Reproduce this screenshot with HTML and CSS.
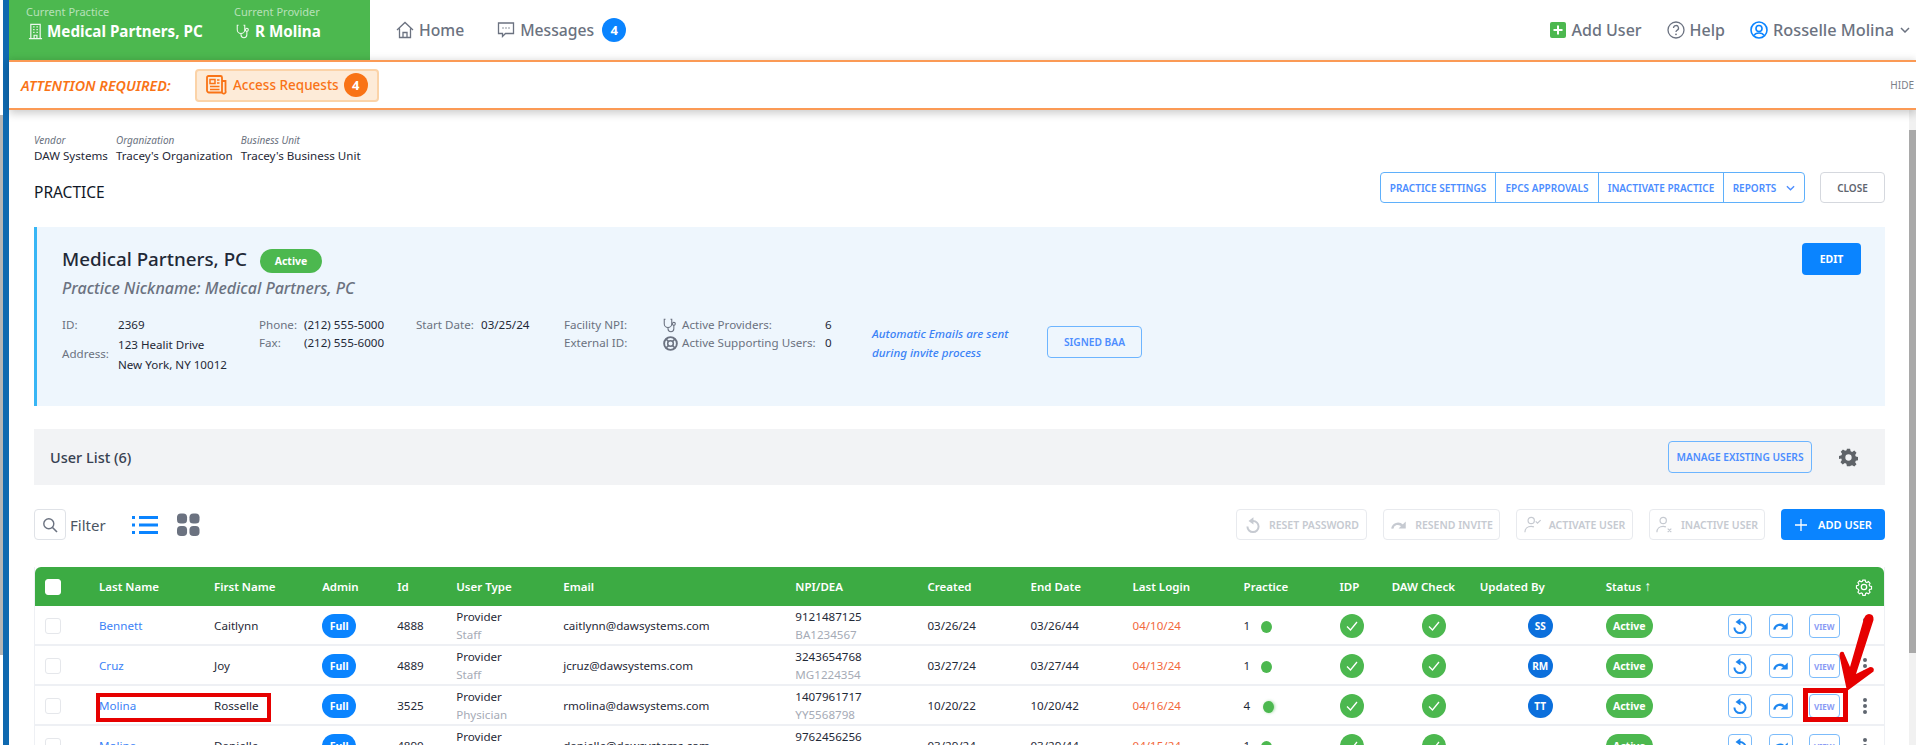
FILE: index.html
```html
<!DOCTYPE html>
<html lang="en">
<head>
<meta charset="utf-8">
<title>Practice</title>
<link rel="stylesheet" href="styles.css">
</head>
<body>
<svg class="defs" width="0" height="0" aria-hidden="true">
  <symbol id="i-building" viewBox="0 0 16 18"><path d="M3 1.500h10v15H3zM1 16.500h14M5.500 4h1.500M9 4h1.500M5.500 7h1.500M9 7h1.500M5.500 10h1.500M9 10h1.500M6.500 16.500v-3.500h3v3.500" fill="none" stroke="currentColor" stroke-width="1.300"/></symbol>
  <symbol id="i-steth" viewBox="0 0 18 18"><path d="M3 1.500H1.500v5.500a4.500 4.500 0 0 0 9 0V1.500H9M6 11.500v1.500a3.500 3.500 0 0 0 7 0v-4" fill="none" stroke="currentColor" stroke-width="1.300"/><circle cx="13" cy="7" r="1.800" fill="none" stroke="currentColor" stroke-width="1.300"/></symbol>
  <symbol id="i-reset" viewBox="0 0 20 20"><path d="M10 5.500a6.200 6.200 0 1 1-6.200 6.200" fill="none" stroke="currentColor" stroke-width="2.200"/><path d="M10.500 1.500v8L5 5.500z" fill="currentColor"/></symbol>
  <symbol id="i-redo" viewBox="0 0 20 20"><path d="M2.500 14c1-5 7-7.500 11.500-3" fill="none" stroke="currentColor" stroke-width="2.500"/><path d="M17.500 6v8h-8z" fill="currentColor"/></symbol>
  <symbol id="i-check" viewBox="0 0 24 24"><circle cx="12" cy="12" r="12" fill="#4cb84f"/><path d="M7 12.500l3.500 3.500 6.500-8" fill="none" stroke="#fff" stroke-width="1.300"/></symbol>
  <symbol id="i-gear" viewBox="0 0 24 24"><path fill-rule="evenodd" fill="currentColor" d="M10 1h4l.7 3.100 1.900.8 2.700-1.700 2.800 2.800-1.700 2.700.8 1.900 3.100.7v4l-3.100.7-.8 1.900 1.700 2.700-2.800 2.800-2.700-1.700-1.900.8L14 23h-4l-.7-3.100-1.900-.8-2.700 1.700-2.800-2.800 1.700-2.700-.8-1.900L0 14v-4l3.100-.7.800-1.900-1.700-2.700L5 1.900l2.700 1.700 1.900-.8zM12 8a4 4 0 1 0 0 8 4 4 0 0 0 0-8z"/></symbol>
</svg>

<div class="gutter"><div class="gutter-thumb"></div></div>

<div class="main">
  <header class="topbar">
    <div class="context">
      <div class="context-block context-practice">
        <div class="context-label">Current Practice</div>
        <div class="context-value"><svg class="context-icon"><use href="#i-building"/></svg>Medical Partners, PC</div>
      </div>
      <div class="context-block">
        <div class="context-label">Current Provider</div>
        <div class="context-value"><svg class="context-icon"><use href="#i-steth"/></svg>R Molina</div>
      </div>
    </div>
    <nav class="nav">
      <a class="nav-item nav-home"><svg class="nav-icon" viewBox="0 0 18 18"><path d="M1 9l8-7.500L17 9M3.500 7.500V16.500h11V7.500M7 16.500v-5h4v5" fill="none" stroke="currentColor" stroke-width="1.300"/></svg>Home</a>
      <a class="nav-item nav-msg"><svg class="nav-icon" viewBox="0 0 18 18"><path d="M1.500 2h15v10.500h-8l-3 3v-3h-4z" fill="none" stroke="currentColor" stroke-width="1.300"/><path d="M5.500 7h1M8.500 7h1M11.500 7h1" stroke="currentColor" stroke-width="1.300"/></svg>Messages<span class="count count-blue">4</span></a>
    </nav>
    <div class="nav nav-right">
      <a class="nav-item"><svg class="nav-icon-sq" viewBox="0 0 16 16"><rect width="16" height="16" rx="2" fill="#4cb84f"/><path d="M8 3.500v9M3.500 8h9" stroke="#fff" stroke-width="2"/></svg>Add User</a>
      <a class="nav-item"><svg class="nav-icon" viewBox="0 0 18 18"><circle cx="9" cy="9" r="8" fill="none" stroke="currentColor" stroke-width="1.300"/><path d="M6.500 7a2.500 2.500 0 1 1 3.500 2.300c-.7.400-1 .8-1 1.700" fill="none" stroke="currentColor" stroke-width="1.300"/><circle cx="9" cy="13.300" r=".9" fill="currentColor"/></svg>Help</a>
      <a class="nav-item nav-user"><svg class="nav-icon nav-icon-blue" viewBox="0 0 18 18"><circle cx="9" cy="9" r="8" fill="none" stroke="currentColor" stroke-width="1.600"/><circle cx="9" cy="7.500" r="3" fill="none" stroke="currentColor" stroke-width="1.600"/><path d="M4 14.500c1-2 3-2.500 5-2.500s4 .5 5 2.500" fill="none" stroke="currentColor" stroke-width="1.600"/></svg>Rosselle Molina<svg class="chev" viewBox="0 0 10 6"><path d="M1 1l4 4 4-4" fill="none" stroke="currentColor" stroke-width="1.500"/></svg></a>
    </div>
  </header>

  <div class="alert">
    <span class="alert-title">ATTENTION REQUIRED:</span>
    <button class="alert-btn"><svg class="alert-icon" viewBox="0 0 21 20"><path d="M1 2.500a1.500 1.500 0 0 1 1.500-1.500h12a1.500 1.500 0 0 1 1.500 1.500v15H3a2 2 0 0 1-2-2zM16 6h3.500v10a1.800 1.800 0 0 1-3.500 1.500" fill="none" stroke="currentColor" stroke-width="1.800"/><path d="M4 4.500h5v4H4zM11 5h2.500M11 8h2.500M4 11.500h9.500M4 14.500h9.500" fill="none" stroke="currentColor" stroke-width="1.500"/></svg>Access Requests<span class="count count-orange">4</span></button>
    <span class="alert-hide">HIDE</span>
  </div>

  <div class="body-wrap">
    <main class="content">
      <div class="crumbs">
        <div class="crumb"><div class="crumb-label">Vendor</div><div class="crumb-value">DAW Systems</div></div>
        <div class="crumb"><div class="crumb-label">Organization</div><div class="crumb-value">Tracey's Organization</div></div>
        <div class="crumb"><div class="crumb-label">Business Unit</div><div class="crumb-value">Tracey's Business Unit</div></div>
      </div>

      <div class="title-row">
        <h1 class="page-title">PRACTICE</h1>
        <div class="title-actions">
          <div class="btn-group">
            <button class="group-btn group-settings">PRACTICE SETTINGS</button>
            <button class="group-btn group-epcs">EPCS APPROVALS</button>
            <button class="group-btn group-inactivate">INACTIVATE PRACTICE</button>
            <button class="group-btn group-reports">REPORTS<svg class="chev-sm" viewBox="0 0 10 6"><path d="M1 1l4 4 4-4" fill="none" stroke="currentColor" stroke-width="1.500"/></svg></button>
          </div>
          <button class="btn-close">CLOSE</button>
        </div>
      </div>

      <section class="panel">
        <div class="panel-head">
          <div class="panel-titles">
            <div class="panel-name-row"><h2 class="panel-name">Medical Partners, PC</h2><span class="pill pill-head">Active</span></div>
            <div class="panel-nick">Practice Nickname: Medical Partners, PC</div>
          </div>
          <button class="btn-edit">EDIT</button>
        </div>
        <div class="info">
          <div class="info-col info-id">
            <span class="lbl">ID:</span><span class="val">2369</span>
            <span class="lbl lbl-mid">Address:</span><span class="val val-addr">123 Healit Drive<br>New York, NY 10012</span>
          </div>
          <div class="info-col info-phone">
            <span class="lbl">Phone:</span><span class="val">(212) 555-5000</span>
            <span class="lbl">Fax:</span><span class="val">(212) 555-6000</span>
          </div>
          <div class="info-col info-date">
            <span class="lbl">Start Date:</span><span class="val">03/25/24</span>
          </div>
          <div class="info-col info-ext">
            <span class="lbl">Facility NPI:</span>
            <span class="lbl">External ID:</span>
          </div>
          <div class="info-col info-active">
            <span class="lbl lbl-icon"><svg class="info-icon"><use href="#i-steth"/></svg>Active Providers:</span><span class="val">6</span>
            <span class="lbl lbl-icon"><svg class="info-icon" viewBox="0 0 16 16"><circle cx="8" cy="8" r="6.800" fill="none" stroke="currentColor" stroke-width="2"/><circle cx="8" cy="8" r="3" fill="none" stroke="currentColor" stroke-width="1.600"/><path d="M3.500 3.500l2.500 2.500M12.500 3.500L10 6M3.500 12.500L6 10M12.500 12.500L10 10" stroke="currentColor" stroke-width="1.600"/></svg>Active Supporting Users:</span><span class="val">0</span>
          </div>
          <div class="info-note">Automatic Emails are sent<br>during invite process</div>
          <div><button class="btn-outline btn-baa">SIGNED BAA</button></div>
        </div>
      </section>

      <div class="list-bar">
        <span class="list-title">User List (6)</span>
        <button class="btn-outline btn-manage">MANAGE EXISTING USERS</button>
        <svg class="list-gear"><use href="#i-gear"/></svg>
      </div>

      <div class="filter-row">
        <button class="search-btn"><svg class="search-icon" viewBox="0 0 16 16"><circle cx="6.800" cy="6.800" r="5" fill="none" stroke="currentColor" stroke-width="1.400"/><path d="M10.500 10.500L15 15" stroke="currentColor" stroke-width="1.600"/></svg></button>
        <span class="filter-text">Filter</span>
        <svg class="view-list" viewBox="0 0 26 20"><path d="M7 2.500h19M7 10h19M7 17.500h19" stroke="#0a84ff" stroke-width="2.800"/><path d="M0 2.500h3M0 10h3M0 17.500h3" stroke="#0a84ff" stroke-width="2.800"/></svg>
        <svg class="view-grid" viewBox="0 0 24 24"><rect width="10.500" height="10.500" rx="4" fill="#6b7280"/><rect x="13" width="10.500" height="10.500" rx="4" fill="#6b7280"/><rect y="13" width="10.500" height="10.500" rx="4" fill="#6b7280"/><rect x="13" y="13" width="10.500" height="10.500" rx="4" fill="#6b7280"/></svg>
        <div class="bulk">
          <button class="btn-muted btn-reset"><svg class="muted-icon"><use href="#i-reset"/></svg>RESET PASSWORD</button>
          <button class="btn-muted btn-resend"><svg class="muted-icon"><use href="#i-redo"/></svg>RESEND INVITE</button>
          <button class="btn-muted btn-activate"><svg class="muted-icon" viewBox="0 0 20 20"><circle cx="8" cy="5" r="3.500" fill="none" stroke="currentColor" stroke-width="1.300"/><path d="M1 18c0-4 3-6.500 7-6.500 1 0 2 .2 3 .6M13 6l2 2 3.500-3.500" fill="none" stroke="currentColor" stroke-width="1.300"/></svg>ACTIVATE USER</button>
          <button class="btn-muted btn-inactive"><svg class="muted-icon" viewBox="0 0 20 20"><circle cx="8" cy="5" r="3.500" fill="none" stroke="currentColor" stroke-width="1.300"/><path d="M1 18c0-4 3-6.500 7-6.500 1 0 2 .2 3 .6M13 14l4 4M17 14l-4 4" fill="none" stroke="currentColor" stroke-width="1.300"/></svg>INACTIVE USER</button>
          <button class="btn-add"><svg class="add-icon" viewBox="0 0 14 14"><path d="M7 1v12M1 7h12" stroke="currentColor" stroke-width="1.300"/></svg>ADD USER</button>
        </div>
      </div>

      <table class="users">
        <colgroup>
          <col class="c-check"><col class="c-last"><col class="c-first"><col class="c-admin"><col class="c-id"><col class="c-type"><col class="c-email"><col class="c-npi"><col class="c-created"><col class="c-end"><col class="c-login"><col class="c-practice"><col class="c-idp"><col class="c-daw"><col class="c-upd"><col class="c-status"><col class="c-actions">
        </colgroup>
        <thead>
          <tr>
            <th class="cell-check"><span class="box box-head"></span></th>
            <th>Last Name</th><th>First Name</th><th>Admin</th><th>Id</th><th>User Type</th><th>Email</th><th>NPI/DEA</th><th>Created</th><th>End Date</th><th>Last Login</th><th>Practice</th><th>IDP</th><th>DAW Check</th><th>Updated By</th><th>Status <span class="sort">↑</span></th>
            <th class="th-gear"><svg class="head-gear" viewBox="0 0 20 20"><path d="M8.500 1.500h3l.5 2.300 1.500.7 2-1.200 2 2.100-1.200 2 .7 1.500 2.300.5v3l-2.300.5-.7 1.500 1.200 2-2 2.100-2-1.200-1.500.7-.5 2.300h-3l-.5-2.300-1.500-.7-2 1.200-2-2.100 1.200-2-.7-1.500L.7 11.500v-3L3 8l.7-1.500-1.200-2 2-2.100 2 1.200L8 2.900z" fill="none" stroke="#fff" stroke-width="1.400" transform="translate(1 1) scale(.9)"/><circle cx="10" cy="10" r="3" fill="none" stroke="#fff" stroke-width="1.400"/></svg></th>
          </tr>
        </thead>
        <tbody>
          <tr>
            <td class="cell-check"><span class="box"></span></td>
            <td><a class="link">Bennett</a></td><td>Caitlynn</td><td><span class="full">Full</span></td><td>4888</td>
            <td><div>Provider</div><div class="sub">Staff</div></td><td>caitlynn@dawsystems.com</td>
            <td><div>9121487125</div><div class="sub">BA1234567</div></td><td>03/26/24</td><td>03/26/44</td><td class="login">04/10/24</td>
            <td><span class="pcount">1</span><span class="dot"></span></td>
            <td><svg class="ok"><use href="#i-check"/></svg></td><td class="cell-daw"><svg class="ok"><use href="#i-check"/></svg></td>
            <td class="cell-upd"><span class="avatar">SS</span></td><td><span class="pill">Active</span></td>
            <td><div class="acts"><button class="act act-reset"><svg class="act-icon"><use href="#i-reset"/></svg></button><button class="act act-redo"><svg class="act-icon"><use href="#i-redo"/></svg></button><button class="act act-view">VIEW</button><span class="kebab"></span></div></td>
          </tr>
          <tr>
            <td class="cell-check"><span class="box"></span></td>
            <td><a class="link">Cruz</a></td><td>Joy</td><td><span class="full">Full</span></td><td>4889</td>
            <td><div>Provider</div><div class="sub">Staff</div></td><td>jcruz@dawsystems.com</td>
            <td><div>3243654768</div><div class="sub">MG1224354</div></td><td>03/27/24</td><td>03/27/44</td><td class="login">04/13/24</td>
            <td><span class="pcount">1</span><span class="dot"></span></td>
            <td><svg class="ok"><use href="#i-check"/></svg></td><td class="cell-daw"><svg class="ok"><use href="#i-check"/></svg></td>
            <td class="cell-upd"><span class="avatar">RM</span></td><td><span class="pill">Active</span></td>
            <td><div class="acts"><button class="act act-reset"><svg class="act-icon"><use href="#i-reset"/></svg></button><button class="act act-redo"><svg class="act-icon"><use href="#i-redo"/></svg></button><button class="act act-view">VIEW</button><span class="kebab"></span></div></td>
          </tr>
          <tr>
            <td class="cell-check"><span class="box"></span></td>
            <td><a class="link">Molina</a></td><td>Rosselle</td><td><span class="full">Full</span></td><td>3525</td>
            <td><div>Provider</div><div class="sub">Physician</div></td><td>rmolina@dawsystems.com</td>
            <td><div>1407961717</div><div class="sub">YY5568798</div></td><td>10/20/22</td><td>10/20/42</td><td class="login">04/16/24</td>
            <td><span class="pcount">4</span><span class="dot dot-soft"></span></td>
            <td><svg class="ok"><use href="#i-check"/></svg></td><td class="cell-daw"><svg class="ok"><use href="#i-check"/></svg></td>
            <td class="cell-upd"><span class="avatar">TT</span></td><td><span class="pill">Active</span></td>
            <td><div class="acts"><button class="act act-reset"><svg class="act-icon"><use href="#i-reset"/></svg></button><button class="act act-redo"><svg class="act-icon"><use href="#i-redo"/></svg></button><button class="act act-view">VIEW</button><span class="kebab"></span></div></td>
          </tr>
          <tr>
            <td class="cell-check"><span class="box"></span></td>
            <td><a class="link">Molina</a></td><td>Danielle</td><td><span class="full">Full</span></td><td>4890</td>
            <td><div>Provider</div><div class="sub">&nbsp;</div></td><td>danielle@dawsystems.com</td>
            <td><div>9762456256</div><div class="sub">&nbsp;</div></td><td>03/29/24</td><td>03/29/44</td><td class="login">04/15/24</td>
            <td><span class="pcount">1</span><span class="dot"></span></td>
            <td><svg class="ok"><use href="#i-check"/></svg></td><td class="cell-daw"><svg class="ok"><use href="#i-check"/></svg></td>
            <td class="cell-upd"></td><td><span class="pill">Active</span></td>
            <td><div class="acts"><button class="act act-reset"><svg class="act-icon"><use href="#i-reset"/></svg></button><button class="act act-redo"><svg class="act-icon"><use href="#i-redo"/></svg></button><button class="act act-view">VIEW</button><span class="kebab"></span></div></td>
          </tr>
        </tbody>
      </table>
    </main>
    <div class="scrollbar"><div class="scroll-thumb"></div></div>
  </div>
</div>

<div class="mark mark-name"></div>
<div class="mark mark-view"></div>
<svg class="mark-arrow" viewBox="0 0 40 80"><path d="M25.500 8Q27 2 31 2 36 2 35.500 8L18 62 32 55Q37 55 35.500 59.500L9 79 1.500 44Q1.500 38.500 5.500 40L12 55Z" fill="#e60000"/></svg>
</body>
</html>
```
FILE: styles.css
```css
* { box-sizing: border-box; }
html, body { margin: 0; height: 745px; overflow: hidden; background: #fff; }
body { display: flex; position: relative; font-family: "Noto Sans", "Open Sans", sans-serif; font-size: 11.600px; color: #1f2937; }
button { font-family: inherit; cursor: pointer; padding: 0; background: none; }
.defs { position: absolute; }

.gutter { width: 9px; height: 745px; flex: none; border-right: 6px solid #0f69b0; padding-top: 115px; }
.gutter-thumb { width: 3px; height: 540px; background: #b5b5b5; }

.main { width: 1907px; flex: none; display: flex; flex-direction: column; }

/* top bar */
.topbar { height: 60px; flex: none; display: flex; align-items: stretch; }
.context { width: 361px; flex: none; background: #4cb84f; padding: 4px 0 0 17px; display: flex; color: #fff; }
.context-block { display: flex; flex-direction: column; }
.context-practice { width: 208px; }
.context-label { font-size: 11px; line-height: 15px; color: rgba(255, 255, 255, .6); }
.context-value { font-size: 15.200px; font-weight: 700; line-height: 24px; display: flex; align-items: center; white-space: nowrap; }
.context-icon { width: 15px; height: 17px; margin: 0 4px 0 2px; color: rgba(255,255,255,.9); }
.nav { display: flex; align-items: center; margin-left: 26px; }
.nav-item { display: flex; align-items: center; color: #6b7280; font-size: 15.700px; font-weight: 500; white-space: nowrap; }
.nav-msg { margin-left: 33px; }
.nav-icon { width: 18px; height: 18px; margin-right: 5px; }
.nav-icon-sq { width: 16px; height: 16px; margin-right: 6px; }
.nav-icon-blue { color: #0a84ff; }
.nav-right { margin-left: auto; gap: 25px; padding-right: 6px; }
.nav-right .nav-item { font-size: 16px; }
.nav-right .nav-user { font-size: 16.300px; }
.chev { width: 10px; height: 6px; margin-left: 6px; }
.count { display: inline-flex; width: 24px; height: 24px; border-radius: 50%; align-items: center; justify-content: center; color: #fff; font-size: 13px; font-weight: 700; }
.count-blue { background: #0a84ff; margin-left: 8px; }
.count-orange { background: #f97316; margin-left: 5px; }

/* alert */
.alert { height: 50px; flex: none; border-top: 2px solid #fb9a55; border-bottom: 2px solid #fb9a55; display: flex; align-items: center; padding-left: 12px; box-shadow: 0 4px 8px rgba(0,0,0,.18), 0 -3px 6px rgba(0,0,0,.06); position: relative; background: #fff; }
.alert-title { width: 174px; font-size: 14.300px; font-style: italic; font-weight: 600; color: #f97316; white-space: nowrap; }
.alert-btn { width: 184px; height: 33px; background: #fdebd8; border: 2px solid #fbd3a8; border-radius: 4px; display: flex; align-items: center; padding-left: 9px; color: #f97316; font-size: 13.500px; font-weight: 500; white-space: nowrap; }
.alert-icon { width: 21px; height: 20px; margin-right: 6px; }
.alert-hide { margin-left: auto; padding-right: 2px; font-size: 10px; color: #7b8088; }

/* content */
.body-wrap { flex: 1; display: flex; min-height: 0; }
.content { width: 1900px; flex: none; padding: 23px 24px 0 25px; }
.scrollbar { width: 7px; flex: none; background: #f1f1f1; padding-top: 20px; }
.scroll-thumb { width: 100%; height: 523px; background: #a9a9a9; }

.crumbs { display: flex; gap: 8px; }
.crumb-label { font-size: 10px; line-height: 14px; font-style: italic; color: #6b7280; }
.crumb-value { font-size: 11.600px; line-height: 16px; margin-top: 1px; color: #1f2937; white-space: nowrap; }

.title-row { display: flex; justify-content: space-between; margin-top: 8px; height: 31px; }
.page-title { margin: 11px 0 0; font-size: 15.500px; line-height: 18px; font-weight: 400; color: #111827; }
.title-actions { display: flex; gap: 15px; }
.btn-group { display: flex; border: 1.500px solid #5fb0fb; border-radius: 4px; height: 31px; }
.group-btn { border: 0; border-left: 1.500px solid #5fb0fb; color: #4c8dff; font-size: 10px; font-weight: 600; white-space: nowrap; display: flex; align-items: center; justify-content: center; }
.group-settings { width: 114px; border-left: 0; }
.group-epcs { width: 103px; }
.group-inactivate { width: 125px; }
.group-reports { width: 81px; }
.chev-sm { width: 9px; height: 6px; margin-left: 10px; }
.btn-close { width: 65px; height: 31px; border: 1.500px solid #d5d8de; border-radius: 4px; color: #5f6670; font-size: 10px; font-weight: 600; }

.panel { margin-top: 24px; height: 179px; background: #eef6fd; border-left: 3px solid #38b6f5; padding: 16px 24px 0 25px; }
.panel-head { display: flex; justify-content: space-between; }
.panel-titles { padding-top: 6px; }
.panel-name-row { display: flex; align-items: center; height: 24px; }
.panel-name { margin: -5px 13px 0 0; font-size: 18.800px; font-weight: 500; color: #1f2937; white-space: nowrap; }
.panel-nick { margin-top: 5px; font-size: 16px; line-height: 20px; font-style: italic; font-weight: 500; color: #6b7280; white-space: nowrap; }
.btn-edit { width: 59px; height: 32px; background: #0a84ff; border: 0; border-radius: 4px; color: #fff; font-size: 10.500px; font-weight: 700; }
.info { display: grid; grid-template-columns: 197px 157px 148px 99px 209px 175px auto; margin-top: 18px; line-height: 18px; font-size: 11.600px; }
.info-col { display: grid; grid-auto-rows: min-content; align-content: start; }
.info-id { grid-template-columns: 56px auto; }
.info-phone { grid-template-columns: 45px auto; }
.info-date { grid-template-columns: 65px auto; }
.info-active { grid-template-columns: 162px auto; }
.lbl { color: #6b7280; white-space: nowrap; }
.val { color: #1f2937; white-space: nowrap; }
.lbl-mid { align-self: center; }
.val-addr { line-height: 19.500px; margin-top: 1px; }
.lbl-icon { display: flex; align-items: center; }
.info-icon { width: 15px; height: 15px; margin-right: 4px; color: #6b7280; }
.info-note { font-size: 11.600px; line-height: 19px; font-style: italic; font-weight: 500; color: #3b82f6; margin-top: 8px; white-space: nowrap; }
.btn-outline { border: 1.500px solid #6db5ff; border-radius: 4px; color: #4c8dff; font-size: 10.200px; font-weight: 600; background: transparent; white-space: nowrap; }
.btn-baa { width: 95px; height: 32px; margin-top: 10px; }

.list-bar { margin-top: 23px; height: 56px; background: #f2f3f5; display: flex; align-items: center; padding: 0 27px 0 16px; }
.list-title { font-size: 14.500px; font-weight: 500; color: #374151; }
.btn-manage { width: 144px; height: 32px; margin-left: auto; margin-right: 27px; }
.list-gear { width: 19px; height: 19px; color: #5f6368; }

.filter-row { margin-top: 24px; height: 31px; display: flex; align-items: center; }
.search-btn { width: 32px; height: 31px; border: 1.500px solid #dfe2e7; border-radius: 4px; display: flex; align-items: center; justify-content: center; color: #6b7280; }
.search-icon { width: 16px; height: 16px; }
.filter-text { margin-left: 4px; font-size: 15px; color: #4b5563; }
.view-list { width: 26px; height: 20px; margin-left: 26px; }
.view-grid { width: 23px; height: 24px; margin-left: 19px; }
.bulk { margin-left: auto; display: flex; gap: 16px; }
.btn-muted { height: 31px; border: 1.500px solid #e8eaee; border-radius: 4px; color: #c6cad1; font-size: 10.500px; font-weight: 600; display: flex; align-items: center; justify-content: center; gap: 7px; white-space: nowrap; }
.btn-reset { width: 131px; }
.btn-resend { width: 117px; }
.btn-activate { width: 117px; }
.btn-inactive { width: 116px; }
.muted-icon { width: 18px; height: 18px; }
.btn-add { width: 104px; height: 31px; background: #0a84ff; border: 0; border-radius: 4px; color: #fff; font-size: 11px; font-weight: 600; display: flex; align-items: center; justify-content: center; gap: 10px; white-space: nowrap; }
.add-icon { width: 14px; height: 14px; }

/* table */
.users { margin-top: 27px; width: 1851px; table-layout: fixed; border-collapse: separate; border-spacing: 0; border-left: 1px solid #eef0f4; border-right: 1px solid #eef0f4; }
.c-check { width: 64px; } .c-last { width: 115px; } .c-first { width: 108px; } .c-admin { width: 75px; }
.c-id { width: 59px; } .c-type { width: 107px; } .c-email { width: 232px; } .c-npi { width: 132px; }
.c-created { width: 103px; } .c-end { width: 102px; } .c-login { width: 111px; } .c-practice { width: 96px; }
.c-idp { width: 52px; } .c-daw { width: 88px; } .c-upd { width: 126px; } .c-status { width: 122px; } .c-actions { width: 156px; }
.users th { height: 39px; background: #3cab43; color: #fff; font-size: 11.500px; font-weight: 600; text-align: left; padding: 0; white-space: nowrap; }
.users th:first-child { border-top-left-radius: 6px; }
.users th:last-child { border-top-right-radius: 6px; }
.sort { font-size: 14px; font-family: "Liberation Sans", sans-serif; line-height: 1; }
.th-gear { text-align: right !important; padding-right: 11px !important; }
.head-gear { width: 18px; height: 18px; vertical-align: middle; }
.users td { height: 40px; padding: 2px 0 0; border-bottom: 2px solid #eef0f4; font-size: 11.600px; line-height: 18px; color: #1f2937; white-space: nowrap; vertical-align: middle; }
.users td.cell-check { padding-left: 10px; }
.users th.cell-check { padding-left: 10px; }
.box { display: block; width: 16px; height: 16px; border: 1.500px solid #e5e7eb; border-radius: 3px; }
.box-head { background: #fff; border-color: #fff; }
.link { color: #3b82f6; }
.sub { color: #a6abb6; }
.users td.login { color: #f2683c; }
.full { display: flex; width: 34px; height: 24px; border-radius: 12px; background: #0a84ff; color: #fff; font-size: 10.500px; font-weight: 700; align-items: center; justify-content: center; }
.pcount { display: inline-block; width: 17px; }
.dot { display: inline-block; width: 11px; height: 12px; border-radius: 50%; background: #4cb84f; vertical-align: middle; }
.dot-soft { margin-left: 2px; box-shadow: 1px 0 3px rgba(76,184,79,.5); }
.ok { display: block; width: 24px; height: 24px; }
.users td.cell-daw { padding-left: 30px; }
.users td.cell-upd { padding-left: 48px; }
.avatar { display: flex; width: 25px; height: 24px; border-radius: 50%; background: #0b6fdc; color: #fff; font-size: 10px; font-weight: 700; align-items: center; justify-content: center; }
.pill { display: flex; width: 47px; height: 24px; border-radius: 12px; background: #4cb84f; color: #fff; font-size: 10.500px; font-weight: 700; align-items: center; justify-content: center; }
.pill-head { width: 62px; height: 24px; }
.acts { display: flex; align-items: center; }
.act { height: 24px; border: 1.500px solid #7cbcfb; border-radius: 4px; background: #fff; color: #1d86f0; display: flex; align-items: center; justify-content: center; }
.act-reset { width: 24px; }
.act-redo { width: 24px; margin-left: 17px; }
.act-view { width: 31px; margin-left: 16px; color: #8a9bf5; font-size: 8px; font-weight: 700; }
.act-icon { width: 18px; height: 18px; }
.kebab { width: 4px; height: 4px; margin-left: 23px; border-radius: 50%; background: #5f6670; box-shadow: 0 -6px 0 #5f6670, 0 6px 0 #5f6670; }

/* annotations drawn over the screenshot */
.mark { position: absolute; border: 4.500px solid #e60000; }
.mark-name { left: 96px; top: 693px; width: 175px; height: 29px; }
.mark-view { left: 1803px; top: 688px; width: 45px; height: 34px; border-width: 5px; }
.mark-arrow { position: absolute; left: 1838px; top: 612px; width: 40px; height: 80px; }
```
